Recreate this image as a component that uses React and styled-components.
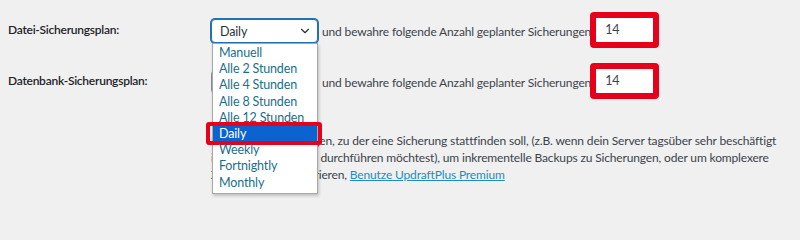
import React from 'react'
import styled, { createGlobalStyle } from 'styled-components'
import { ChevronDown } from 'lucide-react'

const GlobalStyle = createGlobalStyle`
  body {
    margin: 0;
    background: #f0f0f1;
    font-family: Lato, 'Open Sans', sans-serif;
    font-size: 12px;
    letter-spacing: -0.15px;
    color: #2c3338;
  }
`

const Page = styled.div`
  width: 800px;
  height: 202px;
  overflow: hidden;
  padding: 11px 0 0 8px;
  box-sizing: border-box;
`

const Row = styled.div`
  display: flex;
  align-items: center;
  height: 37px;
  margin-bottom: ${(p) => p.gap || 0}px;
`

const Label = styled.div`
  width: 203px;
  flex: none;
  font-weight: 600;
  letter-spacing: -0.25px;
  color: #1d2327;
`

const SelectWrap = styled.div`
  position: relative;
  flex: none;
  z-index: ${(p) => (p.open ? 2 : 1)};
  margin-top: 3px;
`

const SelectBox = styled.div`
  width: 107px;
  height: 24px;
  box-sizing: border-box;
  display: flex;
  align-items: center;
  justify-content: space-between;
  padding: 0 5px 0 8px;
  background: #fff;
  border: 1px solid ${(p) => (p.focused ? '#2271b1' : '#8c8f94')};
  box-shadow: ${(p) => (p.focused ? '0 0 0 1px #2271b1' : 'none')};
  border-radius: 4px;
  font-size: 12.5px;
  color: #2c3338;

  svg {
    color: #2c3338;
  }
`

const Menu = styled.ul`
  position: absolute;
  top: 24px;
  left: 1px;
  width: 106px;
  box-sizing: border-box;
  margin: 0;
  padding: 1px 0 2px;
  list-style: none;
  background: #fff;
  border: 1px solid #a7a7a7;
  box-shadow: 1px 2px 3px rgba(0, 0, 0, 0.2);
`

const Option = styled.li`
  position: relative;
  height: 16.2px;
  line-height: 16px;
  padding-left: 6px;
  font-size: 12.5px;
  white-space: nowrap;
  color: ${(p) => (p.selected ? '#fff' : '#1b6f8a')};
  background: ${(p) => (p.selected ? '#0b63cf' : 'transparent')};

  ${(p) =>
    p.selected &&
    `
    &::after {
      content: '';
      position: absolute;
      inset: -4px -5px -3px -7px;
      border: 4px solid #e8001a;
      border-radius: 3px;
    }
  `}
`

const Inline = styled.span`
  color: #3c434a;
  margin-left: 4px;
  white-space: nowrap;
  padding-top: 3px;
`

const Mark = styled.div`
  flex: none;
  margin-left: -1px;
  border: 6px solid #e8001a;
  border-radius: 4px;
`

const NumberInput = styled.div`
  width: 57px;
  height: 24px;
  box-sizing: border-box;
  padding-left: 9px;
  background: #fff;
  font-size: 12.5px;
  line-height: 24px;
  color: #3c434a;
`

const Description = styled.p`
  margin: 33px 0 0 203px;
  line-height: 17px;
  color: #3c434a;
  white-space: nowrap;

  a {
    color: #1e8cbe;
    text-decoration: underline;
  }
`

const options = [
  'Manuell',
  'Alle 2 Stunden',
  'Alle 4 Stunden',
  'Alle 8 Stunden',
  'Alle 12 Stunden',
  'Daily',
  'Weekly',
  'Fortnightly',
  'Monthly',
]

const Select = ({ value, open }) => (
  <SelectWrap open={open}>
    <SelectBox focused={open}>
      <span>{value}</span>
      <ChevronDown size={14} strokeWidth={2} />
    </SelectBox>
    {open && (
      <Menu>
        {options.map((o) => (
          <Option key={o} selected={o === value}>
            {o}
          </Option>
        ))}
      </Menu>
    )}
  </SelectWrap>
)

const App = () => (
  <>
    <GlobalStyle />
    <Page>
      <Row gap={14}>
        <Label>Datei-Sicherungsplan:</Label>
        <Select value="Daily" open />
        <Inline>und bewahre folgende Anzahl geplanter Sicherungen</Inline>
        <Mark>
          <NumberInput>14</NumberInput>
        </Mark>
      </Row>
      <Row>
        <Label>Datenbank-Sicherungsplan:</Label>
        <Select value="Daily" />
        <Inline>und bewahre folgende Anzahl geplanter Sicherungen</Inline>
        <Mark>
          <NumberInput>14</NumberInput>
        </Mark>
      </Row>
      <Description>
        Um die Zeit festzulegen, zu der eine Sicherung stattfinden soll, (z.B. wenn dein Server tagsüber sehr beschäftigt
        <br />
        ist, und du sie nachts durchführen möchtest), um inkrementelle Backups zu Sicherungen, oder um komplexere
        <br />
        Zeitpläne zu konfigurieren, <a href="#premium">Benutze UpdraftPlus Premium</a>
      </Description>
    </Page>
  </>
)

export default App
